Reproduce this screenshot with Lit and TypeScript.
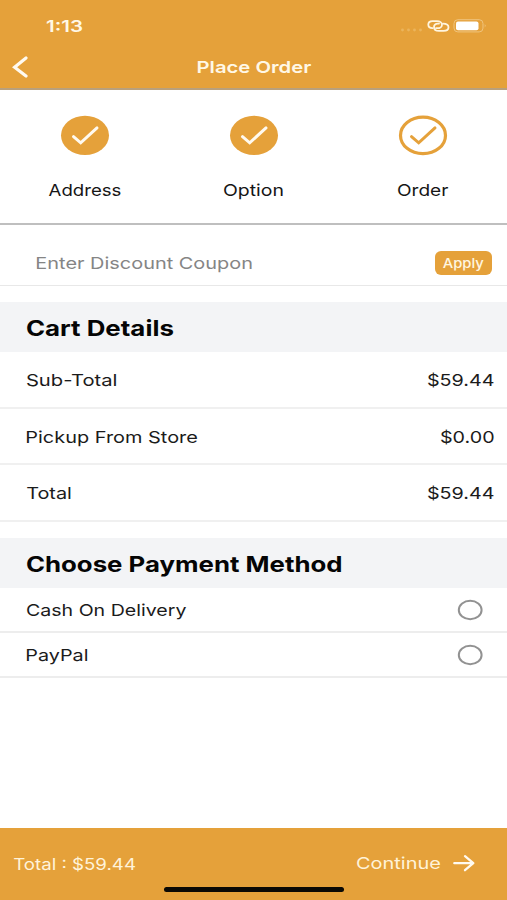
import { LitElement, html, css, svg, unsafeCSS } from "lit";
import { customElement, property } from "lit/decorators.js";

const FAMILY = unsafeCSS('Inter, "Liberation Sans", sans-serif');

/** A single line of text widened so that its glyphs span exactly `span` pixels. */
@customElement("wide-text")
class WideText extends LitElement {
  @property() text = "";
  @property({ type: Number }) span = 0;

  static styles = css`
    :host { display: block; flex: none; white-space: nowrap; }
    .line { display: block; width: max-content; transform-origin: 0 50%; white-space: pre; }
  `;

  updated() {
    const line = this.renderRoot.querySelector(".line") as HTMLElement;
    const style = getComputedStyle(line);
    const ctx = document.createElement("canvas").getContext("2d")!;
    const advance = line.getBoundingClientRect().width;
    // Side bearings are read at ten times the size, for sub-pixel precision.
    ctx.font = `${style.fontWeight} ${parseFloat(style.fontSize) * 10}px ${style.fontFamily}`;
    const m = ctx.measureText(this.text);
    const before = -m.actualBoundingBoxLeft / 10;
    const after = (m.width - m.actualBoundingBoxRight) / 10;
    const scale = this.span / (advance - before - after);
    this.style.width = `${this.span}px`;
    line.style.transform = `translateX(${-before * scale}px) scaleX(${scale})`;
  }

  render() {
    return html`<span class="line">${this.text}</span>`;
  }
}

const wide = (text: string, span: number) =>
  html`<wide-text .text=${text} .span=${span}></wide-text>`;

const steps = [
  { label: "Address", span: 71.5, done: true },
  { label: "Option", span: 58.5, done: true },
  { label: "Order", span: 50, done: false },
];

const totals = [
  { label: "Sub-Total", span: 89, value: "$59.44", valueSpan: 65.5 },
  { label: "Pickup From Store", span: 170, value: "$0.00", valueSpan: 52.5 },
  { label: "Total", span: 43.5, value: "$59.44", valueSpan: 65.5 },
];

const methods = [
  { label: "Cash On Delivery", span: 159 },
  { label: "PayPal", span: 60 },
];

@customElement("app-root")
class AppRoot extends LitElement {
  static styles = css`
    :host {
      display: flex; flex-direction: column; width: 507px; height: 900px;
      box-sizing: border-box; overflow: hidden; background: #fff; color: #1b1b1b;
      font: 400 16.5px/20px ${FAMILY};
    }
    * { box-sizing: border-box; }
    svg { display: block; flex: none; }
    .top { height: 90px; background: #e5a13a; color: #fff8e6; border-bottom: 2px solid #b9a07c; }
    .status { display: flex; align-items: center; height: 52px; padding: 0 20px 0 47px; justify-content: space-between; font-weight: 600; font-size: 16px; }
    .nav { display: grid; grid-template-columns: 1fr auto 1fr; align-items: center; height: 30px; padding: 0 11px 0 12px; font-weight: 600; }
    .steps { display: grid; grid-template-columns: repeat(3, 1fr); height: 135px; border-bottom: 2px solid #bfbfbf; color: #161616; }
    .step { display: flex; flex-direction: column; align-items: center; padding-top: 25px; gap: 24px; }
    .coupon { display: flex; align-items: center; justify-content: space-between; height: 61px; padding: 15px 15px 0 36.5px; border-bottom: 1px solid #e8e8e8; color: #858585; }
    .apply { display: flex; align-items: center; justify-content: center; width: 57px; height: 24px; border: 0; border-radius: 6px; padding: 0; background: #e5a13a; color: #fff6e0; font: 500 13px/16px ${FAMILY}; }
    .heading { display: flex; align-items: center; height: 50px; margin-top: 16px; padding: 2px 26px 0 26.5px; background: #f3f4f6; color: #050505; font-size: 21.5px; line-height: 26px; font-weight: 700; }
    .row { display: flex; align-items: center; justify-content: space-between; height: 56.6px; padding: 2px 13.5px 0 26.5px; border-bottom: 2px solid #f0f0f0; }
    .method { display: flex; align-items: center; justify-content: space-between; height: 45px; padding: 2px 24px 0 26.5px; border-bottom: 2px solid #ededed; }
    .foot { position: relative; display: flex; justify-content: space-between; align-items: flex-start; height: 72px; margin-top: auto; padding: 25px 32px 0 13.5px; background: #e5a13a; color: #fff3d9; }
    .total { font-size: 16px; padding-top: 1px; }
    .go { display: flex; align-items: center; gap: 13px; }
    .home { position: absolute; left: 164px; bottom: 8px; width: 180px; height: 5px; border-radius: 3px; background: #0b0904; }
  `;

  private mark(done: boolean) {
    const stroke = done ? "#fffaf0" : "#e5a13a";
    return html`<svg width="50" height="41" viewBox="0 0 50 41">
      ${done
        ? svg`<ellipse cx="25" cy="20.4" rx="24" ry="19.7" fill="#e5a13a" />`
        : svg`<ellipse cx="25" cy="20.4" rx="22.5" ry="18.2" fill="none" stroke="#e5a13a" stroke-width="3.2" />`}
      <path d="M13.5 21.7 L20.7 27.8 L37 12.9" fill="none" stroke=${stroke} stroke-width="3" stroke-linecap="round" />
    </svg>`;
  }

  render() {
    return html`
      <div class="top">
        <div class="status">
          ${wide("1:13", 35)}
          <svg width="87" height="16" viewBox="0 0 87 16">
            <g fill="#ebb45c">
              <circle cx="2.5" cy="12" r="1.4" /><circle cx="8.5" cy="12" r="1.4" />
              <circle cx="14.5" cy="12" r="1.4" /><circle cx="20.5" cy="12" r="1.4" />
            </g>
            <g fill="none" stroke="#fff5df" stroke-width="1.8" stroke-linecap="round">
              <path d="M32.5 10.2 C29.5 10.2 28.3 8.5 28.3 6.6 C28.3 4.6 30 3.1 32.5 3.1 H37 C40 3.1 42 4.8 42 6.7 C42 8.7 40 10.2 37.5 10.2 H36" />
              <path d="M43 5.6 C46.5 5.6 48.5 7.2 48.5 9.3 C48.5 11.4 46.5 12.9 43.5 12.9 H39 C35.5 12.9 34 11.3 34 9.2 C34 7.1 35.5 5.6 38 5.6 H39" />
            </g>
            <rect x="54" y="1.7" width="29" height="12.2" rx="3.8" fill="none" stroke="#efc47e" />
            <rect x="56" y="3.5" width="22.5" height="8.8" rx="2" fill="#fff" />
            <path d="M84.8 6 q1.6 1.8 0 3.6z" fill="#f3cf92" />
          </svg>
        </div>
        <div class="nav">
          <svg width="17" height="22" viewBox="0 0 17 22">
            <path d="M14 2 L2.6 11.2 L14 20" fill="none" stroke="#fffaf0" stroke-width="3.2" stroke-linecap="round" />
          </svg>
          ${wide("Place Order", 113)}
        </div>
      </div>

      <div class="steps">
        ${steps.map((s) => html`<div class="step">${this.mark(s.done)}${wide(s.label, s.span)}</div>`)}
      </div>

      <div class="coupon">
        ${wide("Enter Discount Coupon", 214.5)}
        <button class="apply">${wide("Apply", 40.5)}</button>
      </div>

      <div class="heading">${wide("Cart Details", 146)}</div>
      ${totals.map((t) => html`<div class="row">${wide(t.label, t.span)}${wide(t.value, t.valueSpan)}</div>`)}

      <div class="heading">${wide("Choose Payment Method", 314)}</div>
      ${methods.map(
        (m) => html`<div class="method">
          ${wide(m.label, m.span)}
          <svg width="26" height="22" viewBox="0 0 26 22">
            <ellipse cx="13.2" cy="11" rx="11.4" ry="9.3" fill="none" stroke="#929292" stroke-width="2" />
          </svg>
        </div>`
      )}

      <div class="foot">
        <div class="total">${wide("Total : $59.44", 121)}</div>
        <div class="go">
          ${wide("Continue", 83)}
          <svg width="22" height="18" viewBox="0 0 22 18">
            <path d="M1.3 9.2 H20 M12 2.2 L20.3 9.2 L12 16.2" fill="none" stroke="#fffaf0" stroke-width="2.3" stroke-linecap="round" stroke-linejoin="round" />
          </svg>
        </div>
        <div class="home"></div>
      </div>
    `;
  }
}
